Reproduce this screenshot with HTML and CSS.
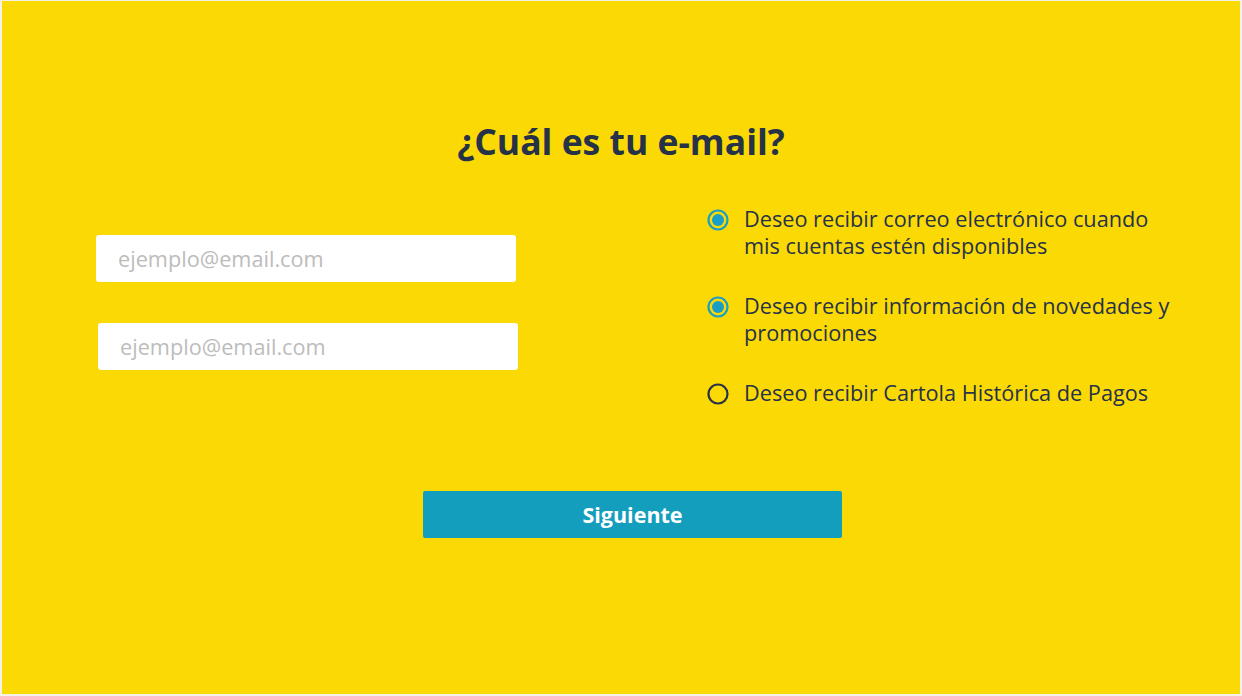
FILE: index.html
```html
<!DOCTYPE html>
<html lang="es">
<head>
<meta charset="utf-8">
<title>¿Cuál es tu e-mail?</title>
<link rel="stylesheet" href="styles.css">
</head>
<body>
<main class="panel">
  <h1 class="title">¿Cuál es tu e-mail?</h1>
  <div class="content">
    <div class="fields">
      <input class="field" type="email" placeholder="ejemplo@email.com">
      <input class="field field-second" type="email" placeholder="ejemplo@email.com">
    </div>
    <ul class="options">
      <li class="option">
        <svg class="radio" width="22" height="22" viewBox="0 0 22 22"><circle cx="11" cy="11" r="9.5" fill="none" stroke="#1a9ec6" stroke-width="2.2"/><circle cx="11" cy="11" r="6" fill="#1a9ec6"/></svg>
        <span class="option-text">Deseo recibir correo electrónico cuando mis cuentas estén disponibles</span>
      </li>
      <li class="option">
        <svg class="radio" width="22" height="22" viewBox="0 0 22 22"><circle cx="11" cy="11" r="9.5" fill="none" stroke="#1a9ec6" stroke-width="2.2"/><circle cx="11" cy="11" r="6" fill="#1a9ec6"/></svg>
        <span class="option-text">Deseo recibir información de novedades y promociones</span>
      </li>
      <li class="option">
        <svg class="radio" width="22" height="22" viewBox="0 0 22 22"><circle cx="11" cy="11" r="9.5" fill="none" stroke="#263248" stroke-width="2.2"/></svg>
        <span class="option-text">Deseo recibir Cartola Histórica de Pagos</span>
      </li>
    </ul>
  </div>
  <div class="actions">
    <button class="next" type="button">Siguiente</button>
  </div>
</main>
</body>
</html>
```
FILE: styles.css
```css
html, body {
  margin: 0;
  padding: 0;
}
body {
  background: #f3f1e8;
  width: 1242px;
  height: 696px;
  overflow: hidden;
  font-family: "Open Sans", "Liberation Sans", sans-serif;
}
.panel {
  box-sizing: border-box;
  margin: 1px 2px 0 2px;
  height: 693px;
  background: #fbd905;
  padding-top: 118px;
}
.title {
  margin: 0;
  font-size: 35.5px;
  line-height: 44px;
  font-weight: 700;
  color: #263248;
  text-align: center;
}
.content {
  display: flex;
  margin-top: 44px;
}
.fields {
  display: flex;
  flex-direction: column;
  gap: 41px;
  padding-left: 94px;
  padding-top: 28px;
  width: 424px;
}
.field {
  box-sizing: border-box;
  width: 420px;
  height: 47px;
  border: none;
  border-radius: 3px;
  background: #ffffff;
  padding: 0 0 0 22px;
  font-family: "Open Sans", "Liberation Sans", sans-serif;
  font-size: 21.7px;
  color: #263248;
  outline: none;
}
.field::placeholder {
  color: #bcbcbc;
}
.field-second {
  margin-left: 2px;
}
.options {
  list-style: none;
  margin: -2px 0 0 186px;
  padding: 0;
  display: flex;
  flex-direction: column;
  gap: 33px;
}
.option {
  display: flex;
  align-items: flex-start;
  gap: 15px;
}
.radio {
  flex: none;
  margin-top: 4px;
  margin-left: 1px;
}
.option-text {
  width: 436px;
  font-size: 21.7px;
  line-height: 27px;
  color: #263248;
}
.actions {
  padding-left: 421px;
  margin-top: 85px;
}
.next {
  width: 419px;
  height: 47px;
  border: none;
  border-radius: 2px;
  background: #149ebd;
  color: #ffffff;
  font-family: "Open Sans", "Liberation Sans", sans-serif;
  font-size: 21.5px;
  font-weight: 700;
  cursor: pointer;
}
```
